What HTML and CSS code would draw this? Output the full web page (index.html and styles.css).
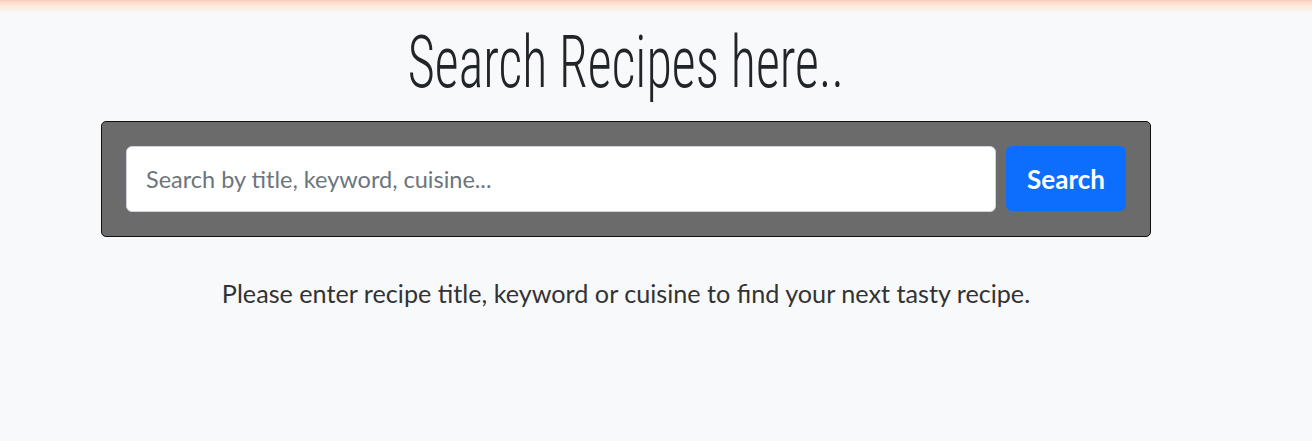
FILE: index.html
```html
<!DOCTYPE html>
<html lang="en">
<head>
<meta charset="utf-8">
<title>Search Recipes</title>
<link rel="stylesheet" href="styles.css">
</head>
<body>
<main class="wrap">
  <h1 class="title"><span class="title-text">Search Recipes here..</span></h1>
  <form class="search-box">
    <input class="search-input" type="text" placeholder="Search by title, keyword, cuisine...">
    <button class="search-btn" type="button">Search</button>
  </form>
  <p class="hint">Please enter recipe title, keyword or cuisine to find your next tasty recipe.</p>
</main>
</body>
</html>
```
FILE: styles.css
```css
html, body {
  margin: 0;
  padding: 0;
}
body {
  background: linear-gradient(to bottom, #f8c9c6 0px, #fcdcc6 2px, #fce6d6 5px, #f8f9fa 13px) no-repeat, #f8f9fa;
  background-size: 100% 13px, auto;
  font-family: Lato, "Open Sans", sans-serif;
  color: #333;
  height: 441px;
  overflow: hidden;
}
.wrap {
  width: 1050px;
  margin-left: 101px;
  padding-top: 22px;
}
.title {
  margin: 0 0 17px;
  height: 82px;
  text-align: center;
  font-family: Roboto, sans-serif;
  font-weight: 300;
  font-stretch: 75%;
  font-size: 72px;
  line-height: 82px;
  color: #212529;
  white-space: nowrap;
}
.title-text {
  display: inline-block;
  transform: scaleX(0.725);
}
.search-box {
  box-sizing: border-box;
  display: flex;
  gap: 10px;
  height: 116px;
  padding: 24px;
  background: #6b6b6b;
  border: 1px solid #111;
  border-radius: 5px;
  margin: 0;
}
.search-input {
  flex: 1;
  box-sizing: border-box;
  height: 66px;
  border: 1px solid #ced4da;
  border-radius: 6px;
  background: #fff;
  padding: 0 19px;
  font-family: Lato, sans-serif;
  font-size: 23.5px;
  color: #212529;
  outline: none;
}
.search-input::placeholder {
  color: #6c757d;
}
.search-btn {
  width: 120px;
  height: 65px;
  border: 0;
  border-radius: 6px;
  background: #0d6efd;
  color: #fff;
  font-family: Lato, sans-serif;
  font-weight: 700;
  font-size: 26px;
  padding: 0;
}
.hint {
  margin: 41px 0 0;
  text-align: center;
  font-size: 25.2px;
  line-height: 30px;
  color: #333;
}
```
